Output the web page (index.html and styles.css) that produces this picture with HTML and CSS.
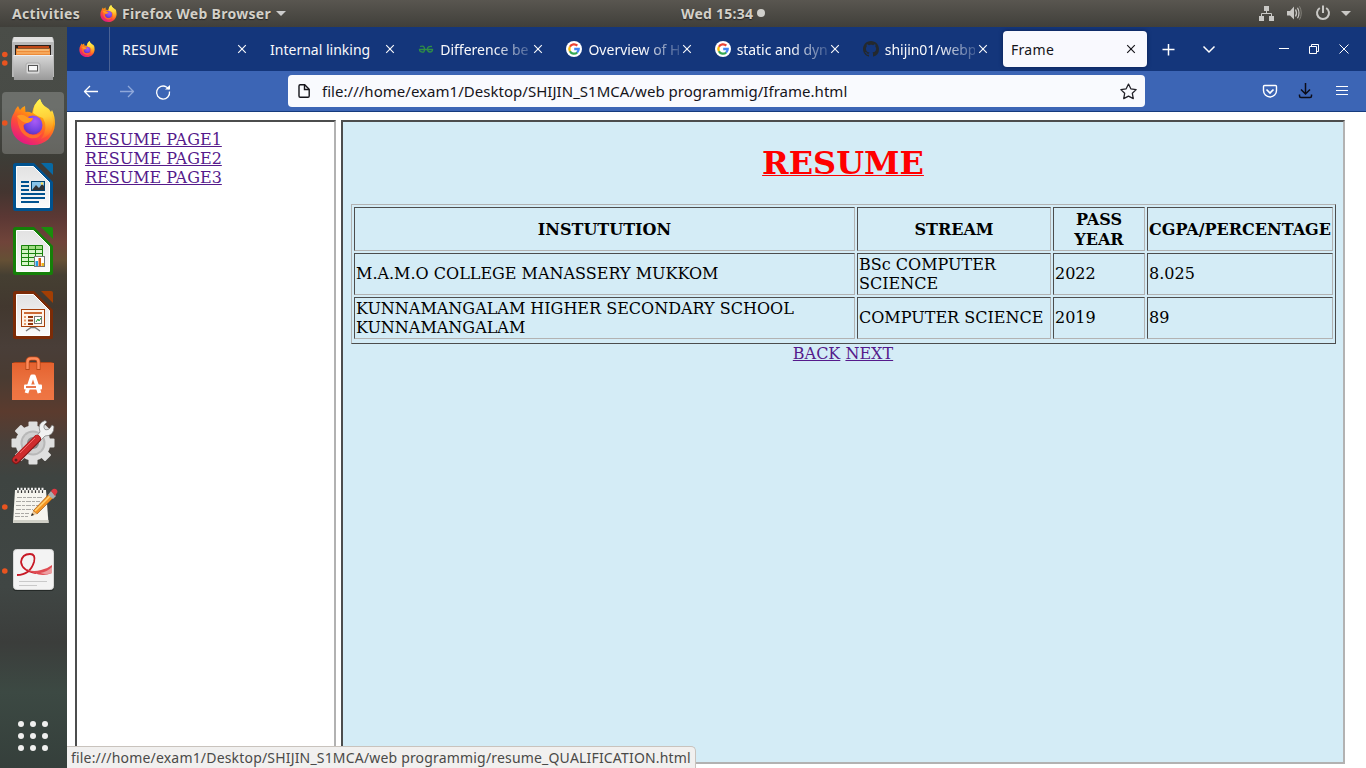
FILE: index.html
```html
<!DOCTYPE html>
<html lang="en">
<head>
<meta charset="utf-8">
<title>Frame</title>
<link rel="stylesheet" href="styles.css">
</head>
<body>
<svg class="defs" width="0" height="0">
  <defs>
    <linearGradient id="fire" x1="0.85" y1="0" x2="0.3" y2="1"><stop offset="0.1" stop-color="#fff44f"/><stop offset="0.4" stop-color="#ff980e"/><stop offset="0.65" stop-color="#ff4f34"/><stop offset="1" stop-color="#e31587"/></linearGradient>
    <linearGradient id="flame" x1="0.5" y1="0" x2="0.6" y2="1"><stop offset="0" stop-color="#fff44f"/><stop offset="0.45" stop-color="#ffd23a"/><stop offset="1" stop-color="#ff7a1c" stop-opacity="0.3"/></linearGradient>
    <radialGradient id="globe" cx="0.6" cy="0.3" r="0.8"><stop offset="0" stop-color="#a95bf5"/><stop offset="0.6" stop-color="#7543e3"/><stop offset="1" stop-color="#5a2fb0"/></radialGradient>
    <linearGradient id="metal" x1="0" y1="0" x2="0" y2="1"><stop offset="0" stop-color="#d8d8d8"/><stop offset="1" stop-color="#9a9a9a"/></linearGradient>
    <linearGradient id="paper" x1="0" y1="0" x2="0" y2="1"><stop offset="0" stop-color="#e2e2e2"/><stop offset="1" stop-color="#fafafa"/></linearGradient>
    <linearGradient id="bag" x1="0" y1="0" x2="0" y2="1"><stop offset="0" stop-color="#e5622f"/><stop offset="1" stop-color="#f0814f"/></linearGradient>
    <symbol id="firefox" viewBox="0 0 44 46">
      <path d="M3 14 Q4 10 7 7 L9 11 Q11 8 14 7 L14.500 13 Q17 12 21 14 Q23 4 29 0 Q31 6 35 8 Q39 10 40 13 L41 11 Q44 17 44 25 C43 38 34 46 22 46 C9 46 0 37 0 25 Q0 18 3 14Z" fill="url(#fire)"/>
      <path d="M22 14 Q23 4 29 0 Q31 6 35 9 Q43 15 42 26 Q40 37 30 40 Q38 29 32 19 Q27 18 22 14Z" fill="url(#flame)"/>
      <circle cx="22" cy="26" r="9.500" fill="url(#globe)"/>
      <path d="M6 17 Q11 15 16 18 Q19 20 22 19 Q21 23 16 24 Q13 25 12 27 Q13 35 22 36 Q29 36 32 32 Q28 41 19 39 Q7 35 6 17Z" fill="#ff6a2c"/>
      <path d="M6 17 Q11 14 16 18 Q19 20 22 19 Q21 23 16 24 Q11 24 6 17Z" fill="#ff9a22"/>
    </symbol>
    <symbol id="google" viewBox="0 0 16 16">
      <circle cx="8" cy="8" r="8" fill="#fff"/>
      <g fill="none" stroke-width="2.300"><path d="M3.900 5.800A4.700 4.700 0 0 1 11.300 4.600" stroke="#ea4335"/><path d="M3.900 10.200A4.700 4.700 0 0 1 3.900 5.800" stroke="#fbbc05"/><path d="M11.200 11.500A4.700 4.700 0 0 1 3.900 10.200" stroke="#34a853"/><path d="M8.200 8H12.700A4.700 4.700 0 0 1 11.100 11.500" stroke="#4285f4"/></g>
    </symbol>
    <symbol id="close" viewBox="0 0 16 16"><path d="M4.200 4.200L11.800 11.800M11.800 4.200L4.200 11.800" stroke="currentColor" stroke-width="1.150" fill="none"/></symbol>
  </defs>
</svg>

<header class="topbar">
  <span class="activities">Activities</span>
  <svg class="top-fox" width="17" height="17"><use href="#firefox"/></svg>
  <span class="app-name">Firefox Web Browser</span>
  <svg class="top-caret" width="10" height="5"><path d="M0 0H10L5 5Z" fill="#ccc"/></svg>
  <div class="clock"><span class="clock-text">Wed 15:34</span><i class="clock-dot"></i></div>
  <svg class="sys" width="100" height="27" fill="#c9c8c5">
    <path d="M9 6h5v5h-5zM4 16h5v5h-5zM14 16h5v5h-5z"/><path d="M11.500 11v2.500M6.500 16v-2.500h10V16" fill="none" stroke="#c9c8c5"/>
    <path d="M32 11h3l4-4.500v13L35 15.500h-3z"/><path d="M40.500 9.500q2 3.500 0 7" fill="none" stroke="#c9c8c5" stroke-width="1.300"/><path d="M42.500 7.700q3 5.300 0 10.600" fill="none" stroke="#c9c8c5" stroke-width="1.200"/><path d="M44.500 6.300q3.500 6.700 0 13.400" fill="none" stroke="#85837c"/>
    <path d="M86 11h10l-5 5z"/><path d="M64.800 8A6 6 0 1 0 71.200 8M68 5.500V13" fill="none" stroke="#c9c8c5" stroke-width="2"/>
  </svg>
</header>

<div class="desktop">
  <nav class="dock">
    <svg class="dock-item" viewBox="0 0 67 64">
      <circle cx="4.800" cy="27.500" r="2.800" fill="#e95420"/><circle cx="4.800" cy="36" r="2.800" fill="#e95420"/>
      <path d="M14 10H52Q53.500 10 54 15V50H12V15Q12.500 10 14 10Z" fill="#b9b9b9"/><path d="M14 10H52L53.500 15H12.500Z" fill="#e0e0e0"/>
      <rect x="15" y="18" width="36" height="11" fill="#2b211c"/><path d="M18 19H49V21H18Z" fill="#c04716"/><path d="M16 21.500H50V28H16Z" fill="#ed8b38"/><path d="M17 23H49" stroke="#ffe1a7"/><path d="M17 26H50" stroke="#ffc37c"/>
      <path d="M13 28H53V53H14Z" fill="url(#metal)"/><path d="M14 28.500H53" stroke="#eee"/>
      <rect x="26" y="36" width="14" height="11" rx="2" fill="#dadada" stroke="#aaa"/><rect x="28.500" y="38.500" width="9" height="5.500" fill="#f8f8f8" stroke="#555"/>
    </svg>
    <svg class="dock-item" viewBox="0 0 67 64">
      <rect x="2" y="1" width="62" height="62" rx="4" fill="#fff" fill-opacity="0.200"/><circle cx="4.800" cy="32" r="2.800" fill="#e95420"/>
      <use href="#firefox" x="11" y="8" width="44" height="46"/>
    </svg>
    <svg class="dock-item" viewBox="0 0 67 64">
      <path d="M15.500 8H34L53 27V54Q53 56 51 56H15.500Q13 56 13 54V10.500Q13 8 15.500 8Z" fill="#00528f"/><path d="M41 8H51Q53 8 53 10V20Z" fill="#0869a3"/>
      <path d="M16.500 11.500H33.500L49.500 27.500V52.500H16.500Z" fill="url(#paper)" stroke="#fff"/>
      <path d="M21 27H29M21 31H29M21 35H29M21 39H45M21 43H45M21 47H39" stroke="#00528f" stroke-width="2"/>
      <rect x="31.500" y="26.500" width="13" height="9" fill="#88c4e8" stroke="#00436f"/><path d="M32 35L36 30L39 33L42 29L44 31V35Z" fill="#333"/><circle cx="42" cy="28.500" r="1.200" fill="#ffdd55"/>
    </svg>
    <svg class="dock-item" viewBox="0 0 67 64">
      <path d="M15.500 8H34L53 27V54Q53 56 51 56H15.500Q13 56 13 54V10.500Q13 8 15.500 8Z" fill="#158008"/><path d="M41 8H51Q53 8 53 10V20Z" fill="#198e0c"/>
      <path d="M16.500 11.500H33.500L49.500 27.500V52.500H16.500Z" fill="url(#paper)" stroke="#fff"/>
      <rect x="21" y="26" width="22" height="21" fill="#d7f5c9"/><rect x="21" y="26" width="22" height="4" fill="#9fdc82"/><path d="M21.500 26.500H42.500V46.500H21.500ZM28.500 26V47M35.500 26V47M21 30.500H43M21 34.500H43M21 38.500H43M21 42.500H43" fill="none" stroke="#19820c"/>
      <rect x="34.500" y="37.500" width="10" height="10" fill="#fff" stroke="#777"/><rect x="35.500" y="42" width="2.500" height="5" fill="#249be0"/><rect x="38.500" y="39" width="2.500" height="8" fill="#d85a15"/><rect x="41.500" y="44" width="2.500" height="3" fill="#efb519"/>
    </svg>
    <svg class="dock-item" viewBox="0 0 67 64">
      <path d="M15.500 8H34L53 27V54Q53 56 51 56H15.500Q13 56 13 54V10.500Q13 8 15.500 8Z" fill="#7c2b06"/><path d="M41 8H51Q53 8 53 10V20Z" fill="#a33e03"/>
      <path d="M16.500 11.500H33.500L49.500 27.500V52.500H16.500Z" fill="url(#paper)" stroke="#fff"/>
      <path d="M26 48L31 44.500H35L40 48" fill="none" stroke="#777" stroke-width="1.500"/><rect x="21.500" y="26.500" width="23" height="17" fill="#fff4e9" stroke="#a63f0a"/><path d="M24 30H42" stroke="#c75b20" stroke-width="1.800"/>
      <path d="M24 34H26M24 37.500H26M24 41H26" stroke="#e79b6a" stroke-width="2"/><path d="M28 34H33M28 37.500H33M28 41H33" stroke="#90340a" stroke-width="2"/><rect x="34.500" y="33.500" width="7" height="7" fill="#fff" stroke="#777"/><path d="M36 39L38 36L39 38L41 35" fill="none" stroke="#19972d"/>
    </svg>
    <svg class="dock-item" viewBox="0 0 67 64">
      <path d="M12 16L15 15H51L54 16Z" fill="#b64517"/><path d="M12 16H54V53H12Z" fill="url(#bag)"/><path d="M12 43H54V53H12Z" fill="#ee6b3a" fill-opacity="0.500"/>
      <path d="M27.500 23V15Q27.500 11.500 31 11.500H35Q38.500 11.500 38.500 15V23" fill="none" stroke="#b84819" stroke-width="4"/><path d="M27.500 22V15Q27.500 11.500 31 11.500H35Q38.500 11.500 38.500 15V22" fill="none" stroke="#ff8b5b" stroke-width="2.500"/>
      <path d="M26.500 46L32 29.500H34L39.500 46" fill="none" stroke="#fff" stroke-width="3.800" stroke-linejoin="round"/><rect x="24" y="37.500" width="18" height="5" rx="1" fill="#fff"/><path d="M26 40H36" stroke="#e76839" stroke-width="1.800"/>
    </svg>
    <svg class="dock-item" viewBox="0 0 67 64">
      <g transform="translate(33 32)"><g fill="#dfdfdf"><rect x="-4.500" y="-21.500" width="9" height="43" rx="1"/><rect x="-4.500" y="-21.500" width="9" height="43" rx="1" transform="rotate(45)"/><rect x="-4.500" y="-21.500" width="9" height="43" rx="1" transform="rotate(90)"/><rect x="-4.500" y="-21.500" width="9" height="43" rx="1" transform="rotate(135)"/><circle r="17.500"/></g><circle r="12.500" fill="#b8b8b8"/><circle r="10.500" fill="#d0d0d0"/><circle r="6" fill="#8a8a8a"/></g>
      <path d="M35 27L40 21Q37 12 45 9.500L47 11Q42 15 45 18.500Q49 20 52 14L54 15.500Q54 25 45 25L39 31Z" fill="#f2f2f2" stroke="#777" stroke-width="0.700"/>
      <path d="M16 49L37 28" stroke="#831515" stroke-width="8" stroke-linecap="round"/><path d="M16 48.500L37 27.500" stroke="#cf2c2d" stroke-width="6.500" stroke-linecap="round"/><path d="M20 42L35 27" stroke="#ef6969"/><circle cx="16" cy="49" r="1.500" fill="#5b2020"/>
    </svg>
    <svg class="dock-item" viewBox="0 0 67 64">
      <circle cx="4.800" cy="32" r="2.800" fill="#e95420"/><path d="M15 15H46L48.500 48H13Z" fill="#f6f5ee"/><path d="M13 45H48.500V48H13Z" fill="#cfcfc6"/>
      <path d="M18 18V14M21.500 18V14M25 18V14M28.500 18V14M32 18V14M35.500 18V14M39 18V14M42.500 18V14" stroke="#333" stroke-width="1.200"/><path d="M17 14H44" stroke="#eee" stroke-width="2.500" stroke-dasharray="2 1.500"/>
      <path d="M17 22.500H43M16 26.500H40M16 30.500H39M16 34.500H33M15 38.500H29M15 41.500H28" stroke="#aaa9a5" stroke-dasharray="5 1 3 1"/>
      <path d="M33 36L50 18L54 22L37 39Z" fill="#f39321" stroke="#9c5918" stroke-width="0.700"/><path d="M35 36L51 20" stroke="#ffd16e" stroke-width="1.500"/><path d="M31 41L33 36L37 39Z" fill="#ecc793"/><path d="M31 41L32 38L34 40Z" fill="#222"/><path d="M48 20L51 16L56 21L53 24Z" fill="#a8adaf"/><path d="M51 16L53 14Q57 13 57.500 17L55 21Z" fill="#dc3942"/>
    </svg>
    <svg class="dock-item" viewBox="0 0 67 64">
      <circle cx="4.800" cy="32" r="2.800" fill="#e95420"/><rect x="13" y="11" width="41" height="41" rx="3" fill="#252a28"/><rect x="13.500" y="10.500" width="40" height="40" rx="3" fill="#f3f3f3" stroke="#d7d7d7"/>
      <path d="M17 36Q30 36 34 23Q36 15 30 15Q22 15 21 23Q22 32 36 34" fill="none" stroke="#c71825" stroke-width="1.800"/><path d="M24 28Q30 34 41 31Q47 30 52 26V34Q43 38 34 34Q27 32 24 28Z" fill="#df4c53"/><path d="M40 34Q47 33 52 28V34Q46 36 40 34Z" fill="#eda0a2"/><path d="M19 42.500H47M19 46.500H37" stroke="#c9c9c9"/>
    </svg>
    <svg class="apps" viewBox="0 0 30 30" fill="#f0f0ef"><circle cx="3" cy="3" r="3"/><circle cx="15" cy="3" r="3"/><circle cx="27" cy="3" r="3"/><circle cx="3" cy="15" r="3"/><circle cx="15" cy="15" r="3"/><circle cx="27" cy="15" r="3"/><circle cx="3" cy="27" r="3"/><circle cx="15" cy="27" r="3"/><circle cx="27" cy="27" r="3"/></svg>
  </nav>

  <div class="browser">
    <div class="tabs">
      <div class="pin"><svg width="16" height="16"><use href="#firefox"/></svg></div>
      <div class="tab"><span class="title wide">RESUME</span><svg class="x"><use href="#close"/></svg></div>
      <div class="tab"><span class="title">Internal linking</span><svg class="x"><use href="#close"/></svg></div>
      <div class="tab"><svg class="fav" viewBox="0 0 16 16"><path d="M2 5.500Q6.500 4 6.500 8T4 11Q1.500 11 1.500 8.500H14.500Q14.500 11 12 11T9.500 8T14 5.500" fill="none" stroke="#2f8d46" stroke-width="1.300"/></svg><span class="title fade">Difference be</span><svg class="x"><use href="#close"/></svg></div>
      <div class="tab"><svg class="fav"><use href="#google"/></svg><span class="title fade">Overview of H</span><svg class="x"><use href="#close"/></svg></div>
      <div class="tab"><svg class="fav"><use href="#google"/></svg><span class="title fade snug">static and dyn</span><svg class="x"><use href="#close"/></svg></div>
      <div class="tab"><svg class="fav" viewBox="0 0 16 16"><path fill="#24292e" d="M8 0C3.580 0 0 3.580 0 8c0 3.540 2.290 6.530 5.470 7.590.4.070.55-.17.55-.38 0-.19-.01-.82-.01-1.490-2.010.37-2.530-.49-2.690-.94-.09-.23-.48-.94-.82-1.130-.28-.15-.68-.52-.01-.53.63-.01 1.080.58 1.230.82.72 1.210 1.870.87 2.330.66.07-.52.28-.87.51-1.070-1.780-.2-3.640-.89-3.640-3.950 0-.87.31-1.590.82-2.150-.08-.2-.36-1.020.08-2.120 0 0 .67-.21 2.200.82.64-.18 1.320-.27 2-.27s1.360.09 2 .27c1.530-1.040 2.200-.82 2.200-.82.44 1.100.16 1.920.08 2.120.51.56.82 1.270.82 2.150 0 3.070-1.870 3.750-3.650 3.950.29.25.54.73.54 1.480 0 1.070-.01 1.930-.01 2.200 0 .21.15.46.55.38A8.010 8.010 0 0 0 16 8c0-4.420-3.580-8-8-8z"/></svg><span class="title fade snug">shijin01/webp</span><svg class="x"><use href="#close"/></svg></div>
      <div class="tab active"><span class="title wide">Frame</span><svg class="x"><use href="#close"/></svg></div>
      <svg class="window-controls" width="219" height="44" fill="none" stroke="#fff"><path d="M15.500 22.500H27.500M21.500 17V28.500" stroke-width="1.500"/><path d="M56.500 19.500L62 25L67.500 19.500" stroke-width="1.500"/><path d="M132 21.500H142M162.500 19.500H169.500V26.500H162.500ZM164.500 19V17.500H171.500V24.500H170M192.500 17.500L201.500 26.500M201.500 17.500L192.500 26.500"/></svg>
    </div>
    <div class="nav">
      <svg class="nav-left" width="221" height="40" fill="none" stroke="#fff" stroke-width="1.300" stroke-linejoin="round"><path d="M31 20.500H17.500M23 15L17.500 20.500L23 26"/><path d="M53 20.500H66.500M61 15L66.500 20.500L61 26" stroke="#8fa8da"/><path d="M102.500 20.500A6.500 6.500 0 1 1 99.500 16L102 18"/><path d="M98 18.500H103V14Z" fill="#fff" stroke="none"/></svg>
      <div class="urlbar">
        <svg class="page" viewBox="0 0 14 16"><path d="M3.200 1.800H7.700L12.200 6.300V13Q12.200 14.200 11 14.200H3.200Q2 14.200 2 13V3Q2 1.800 3.200 1.800Z" fill="none" stroke="#15141a" stroke-width="1.400"/><path d="M7.500 2V6.500H12" fill="none" stroke="#15141a" stroke-width="1.400"/></svg>
        <span class="url">file:///home/exam1/Desktop/SHIJIN_S1MCA/web programmig/Iframe.html</span>
        <svg class="star" viewBox="0 0 16 16"><path d="M8 1L10.200 5.500L15.200 6.200L11.600 9.700L12.500 14.700L8 12.300L3.500 14.700L4.400 9.700L0.800 6.200L5.800 5.500Z" fill="none" stroke="#222128" stroke-width="1.200" stroke-linejoin="round"/></svg>
      </div>
      <svg class="nav-right" width="221" height="40" fill="none" stroke="#fff" stroke-width="1.400"><path d="M119.500 14.500H130.500Q131.500 14.500 131.500 15.500V19.500A6.500 6.500 0 0 1 118.500 19.500V15.500Q118.500 14.500 119.500 14.500Z"/><path d="M121.500 18.500L125 22L128.500 18.500" stroke-width="1.700"/><path d="M160.500 12V22.500M156 18.500L160.500 23L165 18.500M154.500 23.500V25Q154.500 26.500 156 26.500H165Q166.500 26.500 166.500 25V23.500" stroke="#0c0c18" stroke-width="1.500"/><path d="M191 15.500H203M191 19.500H203M191 23.500H203" stroke-width="1.200"/></svg>
    </div>

    <main class="viewport">
      <section class="frame side">
        <a>RESUME PAGE1</a>
        <a>RESUME PAGE2</a>
        <a>RESUME PAGE3</a>
      </section>
      <section class="frame resume">
        <h1>RESUME</h1>
        <table>
          <colgroup><col class="c1"><col class="c2"><col class="c3"><col class="c4"></colgroup>
          <tr class="head"><th>INSTUTUTION</th><th>STREAM</th><th>PASS<br>YEAR</th><th>CGPA/PERCENTAGE</th></tr>
          <tr><td class="single">M.A.M.O COLLEGE MANASSERY MUKKOM</td><td>BSc COMPUTER<br>SCIENCE</td><td class="single">2022</td><td class="single">8.025</td></tr>
          <tr><td>KUNNAMANGALAM HIGHER SECONDARY SCHOOL<br>KUNNAMANGALAM</td><td class="single">COMPUTER SCIENCE</td><td class="single">2019</td><td class="single">89</td></tr>
        </table>
        <p class="pager"><a>BACK</a> <a>NEXT</a></p>
      </section>
      <div class="status"><span>file:///home/exam1/Desktop/SHIJIN_S1MCA/web programmig/resume_QUALIFICATION.html</span></div>
    </main>
  </div>
</div>
</body>
</html>
```
FILE: styles.css
```css
* { box-sizing: border-box; }
body { margin: 0; width: 1366px; height: 768px; overflow: hidden; background: #fff; font-family: "Noto Sans", "Open Sans", sans-serif; }
svg { display: block; flex: none; }
.defs { position: absolute; }

.topbar { position: relative; display: flex; align-items: center; height: 27px; padding-left: 12px; background: linear-gradient(#595650, #403f3a); color: #d3d0c8; font-size: 14px; font-weight: 700; white-space: nowrap; text-shadow: 0 1px 1px #222; }
.activities { width: 88px; letter-spacing: 0.300px; }
.top-fox { margin-right: 5px; }
.app-name { width: 154px; letter-spacing: 0.300px; }
.clock { position: absolute; left: 681px; top: 0; display: flex; align-items: center; height: 26px; }
.clock-text { width: 76px; letter-spacing: 0.250px; }
.clock-dot { width: 8px; height: 8px; border-radius: 50%; background: #d0cfcb; }
.sys { margin-left: auto; margin-right: 11px; }

.desktop { display: flex; height: 741px; }
.dock { display: flex; flex-direction: column; flex: none; width: 67px; background: linear-gradient(#4a4d48 0, #484b46 80px, #3d3d37 130px, #443530 165px, #5b3834 190px, #70443a 215px, #655035 233px, #453f32 248px, #42382f 280px, #493e38 320px, #493b32 350px, #5b3b2e 385px, #49403a 415px, #3e4441 450px, #404644 560px, #3b3d3b 615px, #3c4943 665px, #353f3b 741px); }
.dock-item { width: 67px; height: 64px; }
.apps { width: 30px; height: 30px; margin: auto 0 17px 18px; }

.browser { display: flex; flex-direction: column; flex: 1; min-width: 0; }
.tabs { display: flex; height: 44px; background: #14367b; color: #f9f9fb; }
.pin { display: flex; align-items: center; justify-content: center; width: 43px; padding-right: 2px; border-right: 1px solid #4a6295; }
.tab { display: flex; align-items: center; flex: none; width: 148.200px; padding: 0 8px 0 12px; font-size: 14px; }
.title { flex: 1; min-width: 0; white-space: nowrap; line-height: 24px; padding-top: 1px; }
.wide { letter-spacing: 0.300px; }
.fade { letter-spacing: 0; -webkit-mask-image: linear-gradient(90deg, #000 60%, transparent 110%); mask-image: linear-gradient(90deg, #000 60%, transparent 110%); }
.snug { letter-spacing: -0.050px; }
.fav { width: 16px; height: 16px; margin-right: 6px; }
.x { width: 16px; height: 16px; }
.active { width: 144px; height: 36px; margin: 4px 0 0 4px; padding: 0 8px; border-radius: 4px; background: #f9f9fe; box-shadow: 0 0 4px #0a2050; color: #15141a; }
.window-controls { margin-left: auto; }

.nav { display: flex; align-items: center; height: 41px; background: #3c65b5; border-bottom: 1px solid #163b7d; }
.urlbar { display: flex; align-items: center; width: 857px; height: 32px; padding: 0 8px 0 9px; border-radius: 4px; background: #f9fafe; color: #15141a; }
.page { width: 14px; height: 16px; margin-right: 11px; }
.url { flex: 1; font-size: 15px; letter-spacing: 0.030px; white-space: nowrap; }
.star { width: 17px; height: 17px; }

.viewport { position: relative; display: flex; gap: 5px; flex: 1; padding: 8px 21px 4px 8px; background: #fff; font: 16px/19px "DejaVu Serif", serif; color: #000; }
.frame { border: 2px solid; border-color: #4c4d4d #b2b2b2 #b2b2b2 #4c4d4d; padding: 8px; }
.side { display: flex; flex: none; flex-direction: column; width: 261px; }
.resume { flex: 1; min-width: 0; padding: 0 8px; background: #d4ecf6; }
a { color: #551a8b; text-decoration: underline; }
h1 { margin: 22px 0 21px; font-size: 32px; line-height: 39px; text-align: center; color: #f00; text-decoration: underline 1px; }
table { width: 985px; height: 140px; table-layout: fixed; border-collapse: separate; border-spacing: 2px; border: 1px solid; border-color: #b2b2b2 #4c4d4d #4c4d4d #b2b2b2; padding-bottom: 2px; }
th, td { padding: 1px; border: 1px solid; border-color: #4c4d4d #b2b2b2 #b2b2b2 #4c4d4d; white-space: nowrap; }
th { padding: 2px 1px 0; }
.single { padding-bottom: 3px; }
tr { height: 42px; }
.head { height: 44px; line-height: 20px; }
.c1 { width: 501px; }
.c2 { width: 194px; }
.c3 { width: 92px; }
.c4 { width: 186px; }
.pager { margin: 0; text-align: center; }
.status { position: absolute; left: 0; bottom: 0; width: 629px; height: 22px; padding-left: 4px; border: 1px solid #c9c3bd; border-width: 1px 1px 0 0; border-radius: 0 5px 0 0; background: #f1f0ef; color: #4a4a48; font: 14px/21px "Noto Sans", sans-serif; letter-spacing: 0.180px; white-space: nowrap; }
```
